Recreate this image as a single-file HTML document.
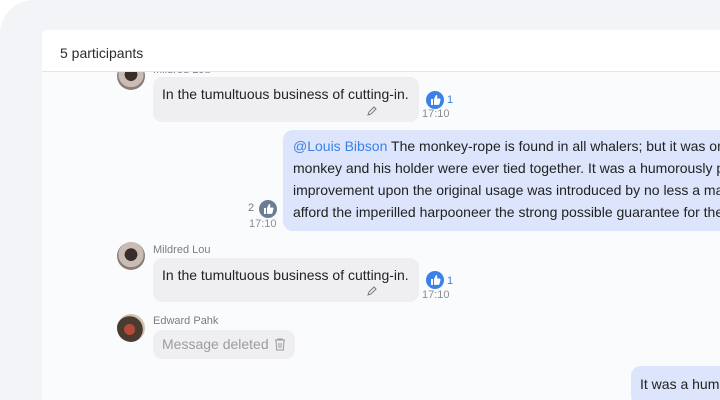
<!DOCTYPE html>
<html><head><meta charset="utf-8"><style>
*{margin:0;padding:0;box-sizing:border-box}
html,body{width:720px;height:400px;overflow:hidden}
body{background:#fff;font-family:"Liberation Sans",sans-serif;position:relative}
.outer{position:absolute;left:0;top:0;width:720px;height:400px;background:#f2f4f8;border-radius:34px 0 0 0}
.card{position:absolute;left:42px;top:30px;width:678px;height:370px;background:#fafbfd;border-radius:6px 0 0 0;overflow:hidden}
.hdr{position:absolute;left:0;top:0;width:100%;height:42px;background:#fff;border-bottom:1px solid #e3e5ea;font-size:14px;color:#2c2c30;padding:15px 0 0 18px;z-index:2}
.a{position:absolute}
.av{position:absolute;width:28px;height:28px;border-radius:50%;background:radial-gradient(circle at 50% 45%,#3a2e2a 0 30%,#c9bcb4 31% 60%,#8b7d75 61%)}
.nm{position:absolute;font-size:11px;color:#7a7d85}
.bb{position:absolute;background:#efeff2;border-radius:9px;font-size:14px;color:#222}
.blue{position:absolute;background:#dce5fb;border-radius:10px 0 0 10px;font-size:14px;color:#222;line-height:22px;white-space:nowrap;overflow:hidden}
.t{position:absolute;font-size:11px;color:#8a8d95}
.like{position:absolute;width:18px;height:18px;border-radius:50%;background:#3b82e8}
.like.g{background:#6b7d92}
.cnt{position:absolute;font-size:11px;color:#3b82e8}
</style></head><body>
<div class="outer"></div>
<div class="card">
<div class="hdr">5 participants</div>
<div class="av" style="left:75px;top:32px"></div>
<div class="nm" style="left:111px;top:34px">Mildred Lou</div>
</div>
<!-- msg1 -->
<div class="bb" style="left:153px;top:77px;width:266px;height:45px;padding:9px 0 0 9px">In the tumultuous business of cutting-in.</div>
<svg class="a" style="left:366px;top:105px" width="12" height="12" viewBox="0 0 12 12"><path d="M2 10l1-3 5-5 2 2-5 5z" fill="none" stroke="#777" stroke-width="1"/></svg>
<div class="like" style="left:426px;top:91px"><svg width="18" height="18" viewBox="0 0 18 18"><path d="M5 8h2v6H5zM8 8l2-4c1 0 1.5.7 1.3 1.6L11 7.5h2.4c.8 0 1.3.7 1.1 1.4l-1 4c-.2.6-.6 1-1.2 1H8z" fill="#fff"/></svg></div>
<div class="cnt" style="left:447px;top:94px">1</div>
<div class="t" style="left:422px;top:108px">17:10</div>
<!-- blue -->
<div class="blue" style="left:283px;top:130px;width:437px;height:101px;padding:5px 0 0 10px"><span style="color:#3b82e8">@Louis Bibson</span> The monkey-rope is found in all whalers; but it was only<br>monkey and his holder were ever tied together. It was a humorously p<br>improvement upon the original usage was introduced by no less a man<br>afford the imperilled harpooneer the strong possible guarantee for the</div>
<div class="t" style="left:248px;top:202px;color:#6b7d92">2</div>
<div class="like g" style="left:259px;top:200px"><svg width="18" height="18" viewBox="0 0 18 18"><path d="M5 8h2v6H5zM8 8l2-4c1 0 1.5.7 1.3 1.6L11 7.5h2.4c.8 0 1.3.7 1.1 1.4l-1 4c-.2.6-.6 1-1.2 1H8z" fill="#fff"/></svg></div>
<div class="t" style="left:249px;top:218px">17:10</div>
<!-- msg2 -->
<div class="av" style="left:117px;top:242px"></div>
<div class="nm" style="left:153px;top:244px">Mildred Lou</div>
<div class="bb" style="left:153px;top:258px;width:266px;height:44px;padding:9px 0 0 9px">In the tumultuous business of cutting-in.</div>
<svg class="a" style="left:366px;top:285px" width="12" height="12" viewBox="0 0 12 12"><path d="M2 10l1-3 5-5 2 2-5 5z" fill="none" stroke="#777" stroke-width="1"/></svg>
<div class="like" style="left:426px;top:271px"><svg width="18" height="18" viewBox="0 0 18 18"><path d="M5 8h2v6H5zM8 8l2-4c1 0 1.5.7 1.3 1.6L11 7.5h2.4c.8 0 1.3.7 1.1 1.4l-1 4c-.2.6-.6 1-1.2 1H8z" fill="#fff"/></svg></div>
<div class="cnt" style="left:447px;top:275px">1</div>
<div class="t" style="left:422px;top:289px">17:10</div>
<!-- msg3 -->
<div class="av" style="left:117px;top:314px;background:radial-gradient(circle at 45% 55%,#b04a3a 0 25%,#4a3a30 26% 60%,#cfc2b0 61%)"></div>
<div class="nm" style="left:153px;top:315px">Edward Pahk</div>
<div class="bb" style="left:153px;top:330px;width:142px;height:29px;padding:6px 0 0 9px;color:#9a9ca3">Message deleted</div>
<svg class="a" style="left:274px;top:338px" width="12" height="13" viewBox="0 0 12 13"><path d="M1 2h10M4 2V1h4v1M2 2l.7 10h6.6L10 2M5 5v5M7 5v5" fill="none" stroke="#999" stroke-width="1"/></svg>
<!-- bottom -->
<div class="blue" style="left:631px;top:366px;width:89px;height:40px;padding:7px 0 0 9px">It was a humorously</div>
</body></html>
